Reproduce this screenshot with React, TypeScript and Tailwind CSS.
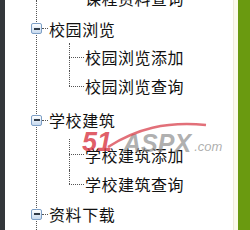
import React from 'react';

type Row = { label: string; kind: 'group' | 'child'; h: number; last?: boolean };

const rows: Row[] = [
  { label: '课程资料查询', kind: 'child', h: 33, last: true },
  { label: '校园浏览', kind: 'group', h: 29 },
  { label: '校园浏览添加', kind: 'child', h: 28 },
  { label: '校园浏览查询', kind: 'child', h: 30, last: true },
  { label: '学校建筑', kind: 'group', h: 38 },
  { label: '学校建筑添加', kind: 'child', h: 31 },
  { label: '学校建筑查询', kind: 'child', h: 28, last: true },
  { label: '资料下载', kind: 'group', h: 32 },
];

function MinusBox() {
  return (
    <div className="relative z-10 w-[11px] h-[11px] rounded-[2px] border border-[#7d9fc6] bg-gradient-to-b from-white to-[#c6d9ee] flex items-center justify-center">
      <div className="w-[6px] h-[2px] bg-[#2f3a46]" />
    </div>
  );
}

function TreeRow({ row }: { row: Row }) {
  if (row.kind === 'group') {
    return (
      <div className="flex items-center pl-[26px]" style={{ height: row.h }}>
        <MinusBox />
        <div className="w-[6px] border-t border-dotted border-[#555]" />
        <span className="ml-[1px] whitespace-nowrap text-[16px] tracking-[0.6px] leading-none text-[#111]">{row.label}</span>
      </div>
    );
  }
  return (
    <div className="relative flex items-center pl-[64px]" style={{ height: row.h }}>
      <div
        className={`absolute left-[64px] top-0 border-l border-dotted border-[#555] ${row.last ? 'h-1/2' : 'h-full'}`}
      />
      <div className="w-[15px] border-t border-dotted border-[#555]" />
      <span className="ml-[1px] whitespace-nowrap text-[16px] tracking-[0.5px] leading-none text-[#111]">{row.label}</span>
    </div>
  );
}

export default function App() {
  return (
    <div
      className="relative w-[250px] h-[230px] overflow-hidden bg-white flex"
      style={{ fontFamily: '"Noto Sans CJK SC", "Noto Sans", sans-serif' }}
    >
      <div className="w-[5px] bg-[#33373b]" />
      <div className="relative flex-1">
        {/* main trunk line */}
        <div className="absolute left-[31px] top-0 bottom-0 border-l border-dotted border-[#555]" />
        <div className="-mt-[19px] flex flex-col">
          {rows.map((r, i) => (
            <TreeRow key={i} row={r} />
          ))}
        </div>
      </div>
      <div className="w-[1px] bg-[#eeeadb]" />
      <div className="w-[4px] bg-[#fcfaec]" />
      <div className="w-[12px] bg-[#6a9a10]" />

      {/* watermark */}
      <div
        className="absolute left-[82px] top-[129px] flex items-end pointer-events-none"
        style={{ fontFamily: '"Liberation Sans", Arial, sans-serif' }}
      >
        <svg className="absolute left-[24px] -top-[8px]" width="110" height="30" viewBox="0 0 110 30">
          <path d="M2 26 C 30 8, 60 0, 100 4" stroke="#d8404c" strokeOpacity="0.75" strokeWidth="2.5" fill="none" />
        </svg>
        <span className="text-[27px] leading-none font-black italic text-[#d8333f]/80">51</span>
        <span className="ml-[11px] text-[25px] leading-none font-black italic text-[#8d8d8d]/70">ASPX</span>
        <span className="ml-[3px] mb-[3px] text-[13px] leading-none italic text-[#9a9a9a]/80">.com</span>
      </div>
    </div>
  );
}
